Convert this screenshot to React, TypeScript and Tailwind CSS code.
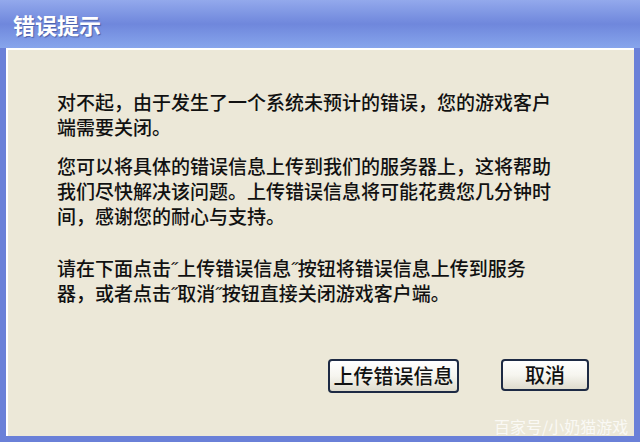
const CJK = "font-['SimSun','Noto_Sans_CJK_SC',sans-serif]";

const paragraphs: string[][] = [
  ["对不起，由于发生了一个系统未预计的错误，您的游戏客户", "端需要关闭。"],
  [
    "您可以将具体的错误信息上传到我们的服务器上，这将帮助",
    "我们尽快解决该问题。上传错误信息将可能花费您几分钟时",
    "间，感谢您的耐心与支持。",
  ],
  ["请在下面点击˝上传错误信息˝按钮将错误信息上传到服务", "器，或者点击˝取消˝按钮直接关闭游戏客户端。"],
];

function XpButton({ label, className }: { label: string; className: string }) {
  return (
    <button
      className={`flex items-center justify-center whitespace-nowrap rounded-[4px] border-2 border-[#1d2a44] bg-gradient-to-b from-[#ffffff] via-[#f6f5ef] to-[#dedbcd] text-[20px] font-medium leading-none text-[#111] ${className}`}
    >
      {label}
    </button>
  );
}

export default function App() {
  return (
    <div className={`relative flex h-[442px] w-[640px] flex-col overflow-hidden bg-[#6a80d8] ${CJK}`}>
      {/* title bar */}
      <div className="flex h-[48px] shrink-0 items-center bg-gradient-to-b from-[#93a9ec] via-[#6f87dc] to-[#87a5ec] pl-[13px]">
        <span className="text-[22px] font-bold text-white [text-shadow:1px_1px_1px_#4a5fa8]">
          错误提示
        </span>
      </div>

      {/* client area */}
      <div className="mx-[6px] mb-[6px] flex flex-1 flex-col border-l-2 border-t-2 border-white bg-[#ece8d8]">
        <div className="flex flex-col gap-[14px] pl-[49px] pt-[39px] text-[19px] font-medium leading-[25px] text-[#111]">
          {paragraphs.map((lines, i) => (
            <p key={i} className={i === 2 ? "mt-[13px]" : ""}>
              {lines.map((line) => (
                <span key={line} className="block whitespace-nowrap">
                  {line}
                </span>
              ))}
            </p>
          ))}
        </div>

        <div className="mt-auto flex justify-end gap-[42px] pb-[43px] pr-[45px]">
          <XpButton label="上传错误信息" className="h-[34px] w-[131px]" />
          <XpButton label="取消" className="h-[32px] w-[88px]" />
        </div>
      </div>

      {/* watermark */}
      <div className="pointer-events-none absolute left-[494px] top-[414px] text-[16px] text-white/75">
        百家号/小奶猫游戏
      </div>
    </div>
  );
}
